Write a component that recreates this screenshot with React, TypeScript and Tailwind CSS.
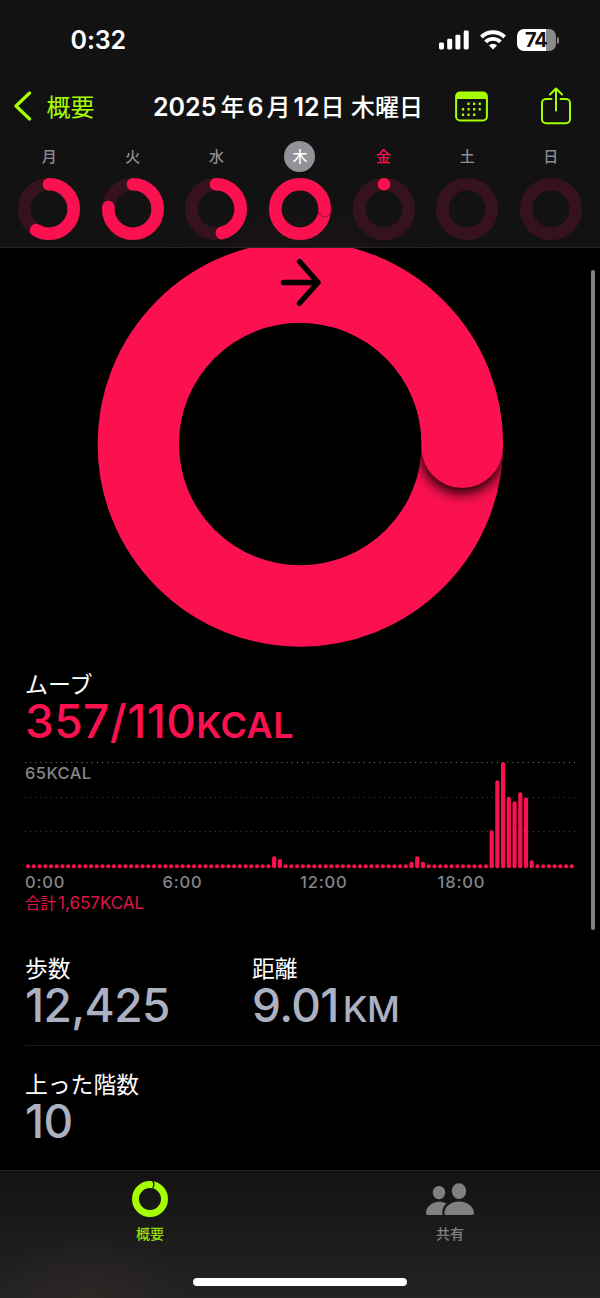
import React from "react";

type Day = { label: string; progress: number; selected?: boolean; today?: boolean };

const MOVE = "#fc1150";
const LIME = "#a6ff00";

const days: Day[] = [
  { label: "月", progress: 0.588 },
  { label: "火", progress: 0.763 },
  { label: "水", progress: 0.461 },
  { label: "木", progress: 3.25, selected: true },
  { label: "金", progress: 0.0001, today: true },
  { label: "土", progress: 0 },
  { label: "日", progress: 0 },
];

// Bars are 15 minute slots, anything not listed is an empty slot
const activity: Record<number, number> = {
  43: 12, 44: 9.3,
  67: 6.5, 68: 12, 69: 6.5,
  81: 38, 82: 88, 83: 106, 84: 71.5, 85: 67, 86: 76, 87: 70.7, 88: 8,
};

const hours = ["0:00", "6:00", "12:00", "18:00"];

const StatusBar: React.FC = () => (
  <div className="flex h-20 items-center justify-between pl-[70.5px] pr-[41px]">
    <span className="text-[25px] font-semibold leading-none tracking-[-0.1px] text-white">0:32</span>
    <div className="flex items-center">
      <svg width="30" height="20" viewBox="0 0 30 20" fill="#fff">
        <rect x="0" y="12.5" width="5" height="7" rx="1.4" />
        <rect x="8.2" y="8.8" width="5" height="10.7" rx="1.4" />
        <rect x="16.4" y="4.8" width="5" height="14.7" rx="1.4" />
        <rect x="24.7" y="0.5" width="5" height="19" rx="1.4" />
      </svg>
      <svg className="ml-[11px]" width="26" height="20" viewBox="0 0 26 20" fill="none" stroke="#fff" strokeWidth="3.9">
        <path d="M1.4 7a16.6 16.6 0 0 1 23.2 0" />
        <path d="M5.6 11.9a10.5 10.5 0 0 1 14.8 0" />
        <path d="M13 19.4l-4-4a5.6 5.6 0 0 1 8 0z" fill="#fff" stroke="none" />
      </svg>
      <div className="ml-[11px] flex h-[22px] w-[39px] items-center overflow-hidden rounded-[7px] bg-[linear-gradient(90deg,#fff_74%,#8a8a8a_74%)] pl-[8.5px]">
        <span className="text-[20px] font-bold leading-none tracking-[-1.2px] text-[#121212]">74</span>
      </div>
      <div className="ml-px h-[7px] w-[2.5px] rounded-r-full bg-[#8a8a8a]" />
    </div>
  </div>
);

const CalendarIcon: React.FC = () => (
  <svg width="33" height="31" viewBox="0 0 33 31" fill="none">
    <rect x="1.1" y="1.6" width="30.8" height="27.8" rx="4" stroke={LIME} strokeWidth="2" />
    <path d="M1 8V5a4 4 0 0 1 4-4h23a4 4 0 0 1 4 4v3z" fill={LIME} />
    <g fill={LIME}>
      {[13, 18.6, 24.2].map((x) => <rect key={x} x={x - 0.6} y="11.6" width="2.3" height="2.3" rx="0.5" />)}
      {[7.5, 13, 18.6, 24.2].map((x) => <rect key={x} x={x - 0.6} y="17.1" width="2.3" height="2.3" rx="0.5" />)}
      {[7.5, 13, 18.6].map((x) => <rect key={x} x={x - 0.6} y="22.6" width="2.3" height="2.3" rx="0.5" />)}
    </g>
  </svg>
);

const ShareIcon: React.FC = () => (
  <svg width="30" height="38" viewBox="0 0 30 38" fill="none" stroke={LIME} strokeWidth="2" strokeLinecap="round" strokeLinejoin="round">
    <path d="M10.5 12H5a4 4 0 0 0-4 4v16.2a4 4 0 0 0 4 4h20a4 4 0 0 0 4-4V16a4 4 0 0 0-4-4h-5.5" />
    <path d="M15 23.5V1.8M9 7.5l6-6 6 6" />
  </svg>
);

const NavBar: React.FC = () => (
  <div className="flex h-[52px] items-center">
    <button className="ml-[14px] flex items-center">
      <svg width="18" height="30" viewBox="0 0 18 30" fill="none" stroke={LIME} strokeWidth="3.2" strokeLinecap="round" strokeLinejoin="round">
        <path d="M15.6 2L2 15l13.6 13" />
      </svg>
      <span className="ml-[14px] w-[49px] whitespace-nowrap pt-[3px] text-[24px] leading-none text-[#a6ff00]">概要</span>
    </button>
    <h1 className="ml-[58px] w-[302px] whitespace-nowrap pt-[2px] text-[25px] font-semibold leading-none text-white">
      2025<span className="ml-[4px] mr-[3px] text-[24px] font-medium">年</span>6<span className="mx-[3px] text-[24px] font-medium">月</span>12<span className="ml-px text-[24px] font-medium">日 木曜日</span>
    </h1>
    <CalendarIcon />
    <div className="-mt-px ml-[53px]">
      <ShareIcon />
    </div>
  </div>
);

const SmallRing: React.FC<{ progress: number }> = ({ progress }) => (
  <svg className="mt-[5px]" width="64" height="64" viewBox="-32 -32 64 64" fill="none">
    <circle r="24.7" stroke="#36121c" strokeWidth="12.6" />
    {progress > 1 && (
      <>
        <circle r="24.7" stroke={MOVE} strokeWidth="12.6" />
        <path d="M18.3 1.5a6.4 6.4 0 0 0 12.8 0" stroke="#9c1238" strokeWidth="1" />
      </>
    )}
    {progress > 0 && progress <= 1 && (
      <circle
        r="24.7"
        stroke={MOVE}
        strokeWidth="12.6"
        strokeLinecap="round"
        pathLength="1"
        strokeDasharray={`${progress} 2`}
        transform="rotate(-90)"
      />
    )}
  </svg>
);

const WeekStrip: React.FC = () => (
  <div className="grid grid-cols-7 px-[7.4px] pt-[9px]">
    {days.map((day) => (
      <div key={day.label} className="flex flex-col items-center">
        <div
          className={`flex h-[31px] w-[31px] items-center justify-center rounded-full text-[15px] font-medium leading-none ${
            day.selected ? "bg-[#929298] text-white" : day.today ? "text-[#fc1150]" : "text-[#8c8c92]"
          }`}
        >
          {day.label}
        </div>
        <SmallRing progress={day.progress} />
      </div>
    ))}
  </div>
);

const MoveRing: React.FC = () => (
  <svg className="block" width="600" height="410" viewBox="0 248 600 410" fill="none">
    <defs>
      <filter id="capShadow" x="-50%" y="-50%" width="200%" height="200%">
        <feGaussianBlur stdDeviation="7" />
      </filter>
      <mask id="band" maskUnits="userSpaceOnUse" x="0" y="248" width="600" height="410">
        <circle cx="300.3" cy="444" r="162" stroke="#fff" strokeWidth="81.4" />
      </mask>
    </defs>
    <circle cx="300.3" cy="444" r="162" stroke={MOVE} strokeWidth="81.4" />
    <g mask="url(#band)">
      <circle cx="462" cy="452" r="41" fill="#000" filter="url(#capShadow)" />
    </g>
    <path d="M300.3 282a162 162 0 0 1 162 162v3.4" stroke={MOVE} strokeWidth="81.4" />
    <circle cx="462.2" cy="447.3" r="40.7" fill={MOVE} />
    <path
      d="M283.5 282.5H318M299.5 261.5l18.5 21-18.5 20.7"
      stroke="#000"
      strokeWidth="5.4"
      strokeLinecap="round"
      strokeLinejoin="round"
    />
  </svg>
);

const MoveChart: React.FC = () => (
  <div className="relative mt-[5px] h-[122px]">
    <svg className="block" width="552" height="122" viewBox="25 750 552 122">
      {[762.5, 797.5, 831.5].map((y, i) => (
        <line key={y} x1="25" x2="575" y1={y} y2={y} stroke={i === 0 ? "#707070" : "#3a3a3a"} strokeWidth="1" strokeDasharray="1.2 3.93" />
      ))}
      {Array.from({ length: 96 }, (_, i) => {
        const h = activity[i] ?? 4;
        return <rect key={i} x={26 + i * 5.723} y={868.2 - h} width="4.2" height={h} rx="2" fill={MOVE} />;
      })}
    </svg>
    <span className="absolute left-0 top-[15px] text-[16.5px] font-medium leading-none tracking-[0.4px] text-[#85858b]">65KCAL</span>
  </div>
);

const Stat: React.FC<{ label: string; value: string; unit?: string }> = ({ label, value, unit }) => (
  <div>
    <div className="h-[30px] whitespace-nowrap text-[22.8px] leading-[32px] text-white">{label}</div>
    <div className="-mt-px h-[46px] whitespace-nowrap text-[46px] font-medium leading-[46px] tracking-[-0.6px] text-[#abb1c1]">
      {value}
      {unit && <span className="ml-[4px] text-[36px] leading-none">{unit}</span>}
    </div>
  </div>
);

const TabBar: React.FC = () => (
  <footer className="relative h-32 border-t border-[#222] bg-[radial-gradient(ellipse_100px_65px_at_90px_128px,#2d2625,transparent),linear-gradient(180deg,#131313,#232323)]">
    <div className="grid grid-cols-2">
      <div className="flex flex-col items-center pt-[9px]">
        <svg width="38" height="38" viewBox="-19 -19 38 38" fill="none">
          <circle r="14.5" stroke={LIME} strokeWidth="7" />
          <path d="M2.3-18.5c2 2.2 2 5.5.3 8" stroke="#161616" strokeWidth="1.3" />
        </svg>
        <span className="mt-[9px] text-[14px] font-medium leading-none text-[#91dc08]">概要</span>
      </div>
      <div className="flex flex-col items-center pt-[9px]">
        <svg width="48" height="38" viewBox="0 0 48 38" fill="#808080">
          <ellipse cx="13" cy="12.6" rx="6.2" ry="6.7" />
          <path d="M2 35c-1.3 0-2-.8-2-2 0-6 6-11.3 13-11.3 2.8 0 5.2.6 7.3 1.8-2.8 2.5-4 5.8-4 8.8 0 1 .1 1.9.5 2.7z" />
          <ellipse cx="33" cy="11.2" rx="7.2" ry="7.9" />
          <path d="M20.5 35c-1.4 0-2.2-.8-2.2-2.2 0-5 5.7-11.3 14.7-11.3s15 6.3 15 11.3c0 1.4-.8 2.2-2.2 2.2z" />
        </svg>
        <span className="mt-[9px] text-[14px] font-medium leading-none text-[#808080]">共有</span>
      </div>
    </div>
    <div className="absolute bottom-[12px] left-[193px] h-[8px] w-[214px] rounded-full bg-white" />
  </footer>
);

export default function App() {
  return (
    <div lang="ja" className="relative flex h-[1298px] w-[600px] flex-col overflow-hidden bg-black font-['Inter','Noto_Sans_CJK_JP',sans-serif]">
      <header className="h-[248px] shrink-0 border-b border-[#252525] bg-[radial-gradient(ellipse_130px_50px_at_300px_248px,#1c1315,transparent),linear-gradient(#121212,#121212)]">
        <StatusBar />
        <NavBar />
        <WeekStrip />
      </header>

      <main className="h-[922px] shrink-0 overflow-hidden">
        <MoveRing />
        <section className="pl-[25px] pt-[11px]">
          <div className="h-[30px] text-[23px] leading-[32px] text-white">ムーブ</div>
          <div className="h-[46px] whitespace-nowrap text-[46px] font-medium leading-[45px] tracking-[0.4px] text-[#fc1150]">
            357/110<span className="text-[36px] font-semibold leading-none">KCAL</span>
          </div>
          <MoveChart />
          <div className="grid w-[550px] grid-cols-4 pt-px">
            {hours.map((hour) => (
              <span key={hour} className="text-[16.5px] font-medium leading-[19px] tracking-[0.85px] text-[#85858b]">{hour}</span>
            ))}
          </div>
          <div className="mt-px h-5 text-[17px] leading-5 text-[#e01249]">
            <span className="mr-[2px] text-[15.5px]">合計</span>1,657KCAL
          </div>
        </section>

        <section className="mt-[40px] pl-[25px]">
          <div className="flex h-[93px] border-b border-[#1a1a1a]">
            <div className="w-[227px]">
              <Stat label="歩数" value="12,425" />
            </div>
            <Stat label="距離" value="9.01" unit="KM" />
          </div>
          <div className="pt-[23px]">
            <Stat label="上った階数" value="10" />
          </div>
        </section>
      </main>

      <TabBar />

      {/* Scroll indicator */}
      <div className="absolute right-[5px] top-[270px] h-[660px] w-[4px] rounded-full bg-[#818181]" />
    </div>
  );
}
